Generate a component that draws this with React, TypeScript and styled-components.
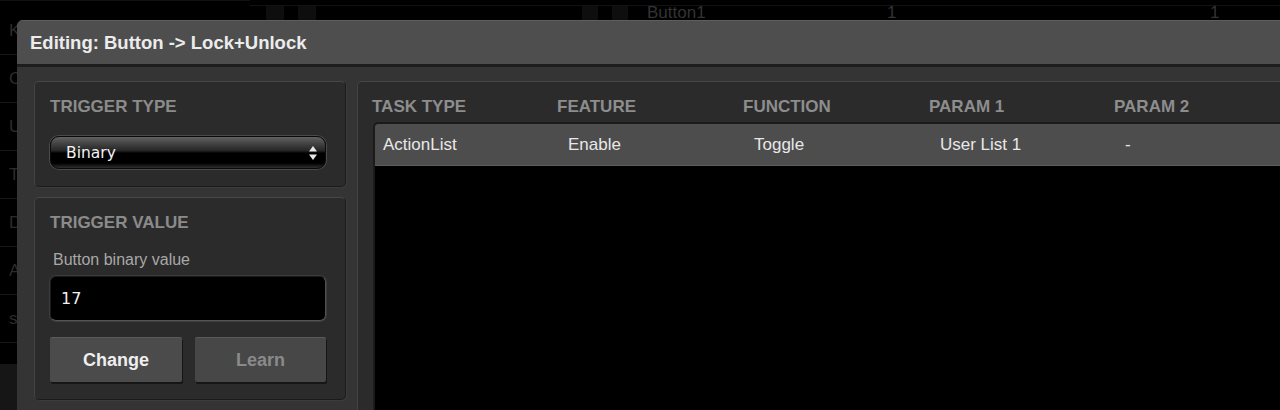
import React from "react";
import styled, { createGlobalStyle } from "styled-components";

const GlobalStyle = createGlobalStyle`
  html, body { margin: 0; padding: 0; background: #000; overflow: hidden; }
  * { box-sizing: border-box; }
`;

const Page = styled.div`
  position: relative;
  width: 1280px;
  height: 410px;
  overflow: hidden;
  background: #000;
  font-family: "Liberation Sans", Arial, sans-serif;
`;

/* ---------- dimmed backdrop ---------- */
const Backdrop = styled.div`
  display: flex;
  height: 100%;
`;

const Sidebar = styled.div`
  width: 250px;
  display: flex;
  flex-direction: column;
  padding-top: 6px;
  border-top: 1px solid #101010;
`;

const SideRow = styled.div`
  height: 48px;
  display: flex;
  align-items: center;
  padding-left: 9px;
  border-bottom: 1px solid #161616;
  color: #2c2c2c;
  font-size: 17px;
`;

const SideFoot = styled.div`
  margin-top: 21px;
  flex: 1;
  background: #161616;
`;

const MainArea = styled.div`
  flex: 1;
  display: flex;
  flex-direction: column;
`;

const TopRow = styled.div`
  display: grid;
  grid-template-columns: 16px 18px 14px 18px 266px 16px 14px 16px 19px 240px 323px 1fr;
  height: 20px;
  border-top: 1px solid #121212;
  margin-top: 5px;
`;

const Band = styled.div<{ $shade?: boolean }>`
  background: ${(p) => (p.$shade ? "#0e0e0e" : "transparent")};
`;

const GhostText = styled.div`
  color: #333;
  font-size: 17px;
  line-height: 14px;
`;

/* ---------- dialog ---------- */
const Dialog = styled.div`
  position: absolute;
  left: 17px;
  top: 20px;
  width: 1300px;
  height: 390px;
  background: #343434;
  border-radius: 6px 0 0 0;
  overflow: hidden;
  display: flex;
  flex-direction: column;
`;

const TitleBar = styled.div`
  height: 47px;
  flex: none;
  background: #4e4e4e;
  border-top: 1px solid #5e5e5e;
  border-bottom: 3px solid #1d1d1d;
  display: flex;
  align-items: center;
  padding-left: 13px;
  padding-top: 1px;
  color: #ececec;
  font-weight: bold;
  font-size: 18.5px;
`;

const Body = styled.div`
  flex: 1;
  display: flex;
  gap: 11px;
  padding: 14px 0 0 17px;
`;

const LeftColumn = styled.div`
  width: 312px;
  flex: none;
  display: flex;
  flex-direction: column;
  gap: 10px;
  padding-bottom: 10px;
`;

const Panel = styled.div`
  background: #2b2b2b;
  border: 1px solid #1b1b1b;
  border-top-color: #474747;
  border-left-color: #434343;
  border-radius: 5px;
  box-shadow: 1px 1px 0 #3c3c3c;
`;

const LeftPanel = styled(Panel)<{ $grow?: boolean }>`
  padding: 15px 19px 17px 15px;
  display: flex;
  flex-direction: column;
  ${(p) => (p.$grow ? "flex: 1;" : "")}
`;

const Heading = styled.div`
  color: #8b8b8b;
  font-weight: bold;
  font-size: 17px;
  line-height: 20px;
`;

const SelectBox = styled.div`
  margin-top: 19px;
  height: 33px;
  border-radius: 9px;
  border: 1px solid #0a0a0a;
  box-shadow: 0 0 0 1px #4a4a4a;
  background: linear-gradient(
    to bottom,
    #626262 0%,
    #424242 22%,
    #262626 44%,
    #000 52%,
    #000 84%,
    #2e2e2e 100%
  );
  display: flex;
  align-items: center;
  justify-content: space-between;
  padding: 1px 7px 0 15px;
  color: #f2f2f2;
  font-family: "DejaVu Sans", Verdana, sans-serif;
  font-size: 15.5px;
`;

const FieldLabel = styled.div`
  margin-top: 17px;
  padding-left: 3px;
  color: #a8a8a8;
  font-size: 16px;
  line-height: 20px;
`;

const ValueInput = styled.div`
  margin-top: 6px;
  height: 45px;
  background: #000;
  border: 1px solid #1a1a1a;
  border-bottom-color: #555;
  border-right-color: #505050;
  box-shadow: 0 0 0 1px #3c3c3c;
  border-radius: 6px;
  display: flex;
  align-items: center;
  padding-left: 10px;
  color: #f2f2f2;
  font-family: "DejaVu Sans", Verdana, sans-serif;
  font-size: 16px;
`;

const ButtonRow = styled.div`
  margin-top: 16px;
  display: grid;
  grid-template-columns: 132px 131px;
  gap: 13px;
`;

const ActionButton = styled.div<{ $disabled?: boolean }>`
  height: 45px;
  display: flex;
  align-items: center;
  justify-content: center;
  background: ${(p) => (p.$disabled ? "#474747" : "#4b4b4b")};
  border-top: 1px solid #5a5a5a;
  border-radius: 2px;
  box-shadow: 1px 2px 0 #161616;
  color: ${(p) => (p.$disabled ? "#8a8a8a" : "#efefef")};
  font-weight: bold;
  font-size: 18px;
`;

const TaskPanel = styled(Panel)`
  flex: 1;
  display: flex;
  flex-direction: column;
  padding: 15px 0 0 14px;
  border-bottom: none;
  border-radius: 5px 0 0 0;
`;

const Columns = styled.div`
  display: grid;
  grid-template-columns: 185px 186px 186px 185px 1fr;
`;

const HeadCell = styled.div`
  color: #8d8d8d;
  font-weight: bold;
  font-size: 17px;
  line-height: 20px;
`;

const Table = styled.div`
  margin-top: 5px;
  margin-left: 1px;
  flex: 1;
  background: #000;
  border-top: 2px solid #1b1b1b;
  border-left: 2px solid #1b1b1b;
  border-radius: 5px 0 0 0;
  overflow: hidden;
`;

const Row = styled(Columns)`
  height: 42px;
  align-items: center;
  background: #4d4d4d;
  border-bottom: 1px solid #5c5c5c;
  padding-left: 8px;
`;

const Cell = styled.div`
  color: #e8e8e8;
  font-size: 17px;
`;

const Arrows = () => (
  <svg width="10" height="16" viewBox="0 0 10 16" aria-hidden="true">
    <polygon points="5,1 9,6.5 1,6.5" fill="#e8e8e8" />
    <polygon points="1,9.5 9,9.5 5,15" fill="#e8e8e8" />
  </svg>
);

const sideItems = ["Keypad", "Config", "Users", "Triggers", "Devices", "Actions", "settings"];

export default function App() {
  return (
    <Page>
      <GlobalStyle />
      <Backdrop>
        <Sidebar>
          {sideItems.map((s) => (
            <SideRow key={s}>{s}</SideRow>
          ))}
          <SideFoot />
        </Sidebar>
        <MainArea>
          <TopRow>
            <Band />
            <Band $shade />
            <Band />
            <Band $shade />
            <Band />
            <Band $shade />
            <Band />
            <Band $shade />
            <Band />
            <GhostText>Button1</GhostText>
            <GhostText>1</GhostText>
            <GhostText>1</GhostText>
          </TopRow>
        </MainArea>
      </Backdrop>

      <Dialog>
        <TitleBar>Editing: Button -&gt; Lock+Unlock</TitleBar>
        <Body>
          <LeftColumn>
            <LeftPanel>
              <Heading>TRIGGER TYPE</Heading>
              <SelectBox>
                <span>Binary</span>
                <Arrows />
              </SelectBox>
            </LeftPanel>
            <LeftPanel $grow>
              <Heading>TRIGGER VALUE</Heading>
              <FieldLabel>Button binary value</FieldLabel>
              <ValueInput>17</ValueInput>
              <ButtonRow>
                <ActionButton>Change</ActionButton>
                <ActionButton $disabled>Learn</ActionButton>
              </ButtonRow>
            </LeftPanel>
          </LeftColumn>
          <TaskPanel>
            <Columns>
              <HeadCell>TASK TYPE</HeadCell>
              <HeadCell>FEATURE</HeadCell>
              <HeadCell>FUNCTION</HeadCell>
              <HeadCell>PARAM 1</HeadCell>
              <HeadCell>PARAM 2</HeadCell>
            </Columns>
            <Table>
              <Row>
                <Cell>ActionList</Cell>
                <Cell>Enable</Cell>
                <Cell>Toggle</Cell>
                <Cell>User List 1</Cell>
                <Cell>-</Cell>
              </Row>
            </Table>
          </TaskPanel>
        </Body>
      </Dialog>
    </Page>
  );
}
